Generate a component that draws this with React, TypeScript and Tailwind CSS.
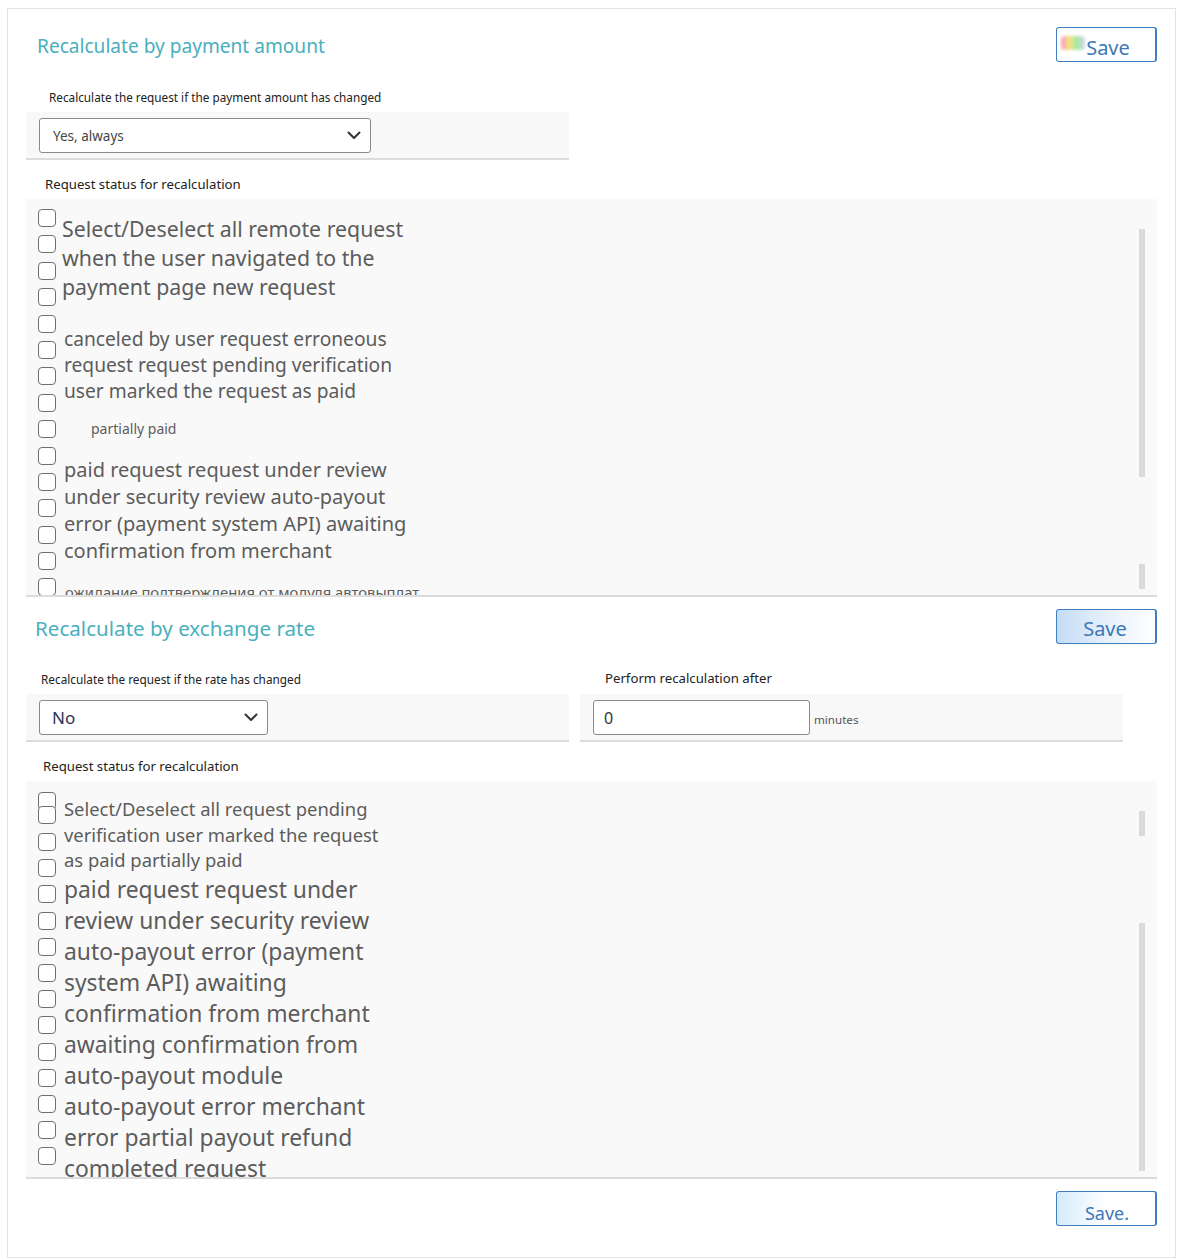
import clsx from "clsx";

const box = "block h-[18px] w-[18px] shrink-0 rounded-[4px] border border-[#6f6f6f] bg-white";

function Chevron() {
  return (
    <svg width="14" height="9" viewBox="0 0 14 9" fill="none" className="shrink-0">
      <path d="M1.5 1.5l5.5 5.5 5.5-5.5" stroke="#333" strokeWidth="2" strokeLinecap="round" strokeLinejoin="round" />
    </svg>
  );
}

function SaveButton({ variant, label }: { variant: 1 | 2 | 3; label: string }) {
  return (
    <button
      className={clsx(
        "relative flex h-[35px] w-[101px] items-center justify-center rounded-[3px] border border-[#3f7fc0] border-r-2 text-[20px] leading-none text-[#3c78b5]",
        variant === 1 && "bg-white pt-[6px]",
        variant === 2 && "bg-gradient-to-r from-[#c5dcf5] via-[#e6f0fb] to-white pt-[4px]",
        variant === 3 && "bg-gradient-to-r from-[#d3ecfb] via-white to-white pt-[8px]"
      )}
    >
      {variant === 1 && (
        <span className="absolute left-[4px] top-[8px] h-[14px] w-[24px] rounded-sm bg-[linear-gradient(90deg,#f26bb0,#f7d94a,#79e07a,#c8c3ea)] opacity-70 blur-[1.5px]" />
      )}
      <span className={clsx("relative", variant === 1 ? "ml-[4px]" : variant === 3 ? "ml-[2px] text-[18px]" : "ml-[-2px]")}>
        {label}
      </span>
    </button>
  );
}

function ScrollThumbs({ a, b }: { a: number; b: number }) {
  return (
    <div className="ml-auto mr-[12px] flex flex-col pt-[30px]">
      <span className={clsx("block w-[6px] bg-[#dadada]", a === 248 ? "h-[248px]" : "h-[25px]")} />
      <span className={clsx("mt-[87px] block w-[6px] bg-[#dadada]", b === 248 ? "h-[248px]" : "h-[25px]")} />
    </div>
  );
}

export default function App() {
  const list1 = Array.from({ length: 15 });
  const list2 = Array.from({ length: 15 });

  return (
    <div className="h-[1259px] overflow-hidden bg-white pl-[7px] pt-[8px] font-['Noto_Sans',sans-serif]">
      <div className="w-[1169px] border border-[#e3e3e3] px-[18px] pb-[31px] pt-[18px]">
        {/* payment amount */}
        <div className="flex h-[35px] items-center justify-between">
          <h2 className="pl-[11px] pt-[2px] text-[19.1px] leading-[28px] text-[#4aafbd]">Recalculate by payment amount</h2>
          <SaveButton variant={1} label="Save" />
        </div>
        <div className="mt-[27px] pl-[23px] text-[11.75px] leading-[16px] text-[#222]">
          Recalculate the request if the payment amount has changed
        </div>
        <div className="mt-[7px] h-[48px] w-[543px] border-b-2 border-[#dcdcdc] bg-[#f8f8f8] pl-[13px] pt-[6px]">
          <div className="flex h-[35px] w-[332px] items-center justify-between rounded-[3px] border border-[#8a8a8a] bg-white pl-[13px] pr-[9px]">
            <span className="pt-[2px] text-[13.5px] text-[#444]">Yes, always</span>
            <Chevron />
          </div>
        </div>
        <div className="mt-[15px] pl-[19px] text-[13.2px] leading-[18px] text-[#222]">Request status for recalculation</div>
        <div className="mt-[6px] flex h-[398px] overflow-hidden border-b-2 border-[#dcdcdc] bg-[#f9f9f9] pl-[12px]">
          <div className="flex flex-col pt-[10px]">
            {list1.map((_, i) => (
              <span key={i} className={clsx(box, i > 0 && "mt-[8.4px]")} />
            ))}
          </div>
          <div className="ml-[6px] whitespace-nowrap pt-[15px] text-[#5c5c5c]">
            <div className="text-[21.3px] leading-[29px]">
              <div>Select/Deselect all remote request</div>
              <div>when the user navigated to the</div>
              <div>payment page new request</div>
            </div>
            <div className="ml-[2px] mt-[25px] text-[19.2px] leading-[26px]">
              <div>canceled by user request erroneous</div>
              <div>request request pending verification</div>
              <div>user marked the request as paid</div>
            </div>
            <div className="ml-[29px] mt-[14.6px] text-[14px] leading-[20px]">partially paid</div>
            <div className="ml-[2px] mt-[17px] text-[20px] leading-[27px]">
              <div>paid request request under review</div>
              <div>under security review auto-payout</div>
              <div>error (payment system API) awaiting</div>
              <div>confirmation from merchant</div>
            </div>
            <div className="ml-[3px] mt-[18px] text-[14.8px] leading-[20px]">ожидание подтверждения от модуля автовыплат</div>
          </div>
          <ScrollThumbs a={248} b={25} />
        </div>

        {/* exchange rate */}
        <div className="mt-[12px] flex h-[35px] items-center justify-between">
          <h2 className="pl-[9px] pt-[2px] text-[20.6px] leading-[28px] text-[#4aafbd]">Recalculate by exchange rate</h2>
          <SaveButton variant={2} label="Save" />
        </div>
        <div className="mt-[25px] flex gap-[11px]">
          <div className="w-[543px]">
            <div className="mt-[2px] pl-[15px] text-[11.8px] leading-[16px] text-[#222]">
              Recalculate the request if the rate has changed
            </div>
            <div className="mt-[7px] h-[48px] border-b-2 border-[#dcdcdc] bg-[#f8f8f8] pl-[13px] pt-[6px]">
              <div className="flex h-[35px] w-[229px] items-center justify-between rounded-[3px] border border-[#8a8a8a] bg-white pl-[12px] pr-[9px]">
                <span className="text-[17px] text-[#2e3350]">No</span>
                <Chevron />
              </div>
            </div>
          </div>
          <div className="w-[543px]">
            <div className="pl-[25px] text-[13.2px] leading-[18px] text-[#222]">Perform recalculation after</div>
            <div className="mt-[7px] flex h-[48px] items-start border-b-2 border-[#dcdcdc] bg-[#f8f8f8] pl-[13px] pt-[6px]">
              <div className="flex h-[35px] w-[217px] items-center rounded-[3px] border border-[#8a8a8a] bg-white pl-[10px]">
                <span className="text-[16px] text-[#333]">0</span>
              </div>
              <span className="ml-[4px] mt-[12px] text-[11.6px] leading-[16px] text-[#555]">minutes</span>
            </div>
          </div>
        </div>
        <div className="mt-[15px] pl-[17px] text-[13.2px] leading-[18px] text-[#222]">Request status for recalculation</div>
        <div className="mt-[6px] flex h-[398px] overflow-hidden border-b-2 border-[#dcdcdc] bg-[#f9f9f9] pl-[12px]">
          <div className="flex flex-col pt-[11px]">
            {list2.map((_, i) => (
              <span
                key={i}
                className={clsx(box, i === 1 && "mt-[-4px]", i === 2 && "mt-[9px]", i > 2 && "mt-[8.2px]")}
              />
            ))}
          </div>
          <div className="ml-[8px] whitespace-nowrap pt-[15px] text-[#5c5c5c]">
            <div className="text-[18.4px] leading-[25.5px]">
              <div>Select/Deselect all request pending</div>
              <div>verification user marked the request</div>
              <div>as paid partially paid</div>
            </div>
            <div className="mt-[1px] text-[22.85px] leading-[31.1px]">
              <div>paid request request under</div>
              <div>review under security review</div>
              <div>auto-payout error (payment</div>
              <div>system API) awaiting</div>
              <div>confirmation from merchant</div>
              <div>awaiting confirmation from</div>
              <div>auto-payout module</div>
              <div>auto-payout error merchant</div>
              <div>error partial payout refund</div>
              <div>completed request</div>
            </div>
          </div>
          <ScrollThumbs a={25} b={248} />
        </div>
        <div className="mt-[12px] flex justify-end">
          <SaveButton variant={3} label="Save." />
        </div>
      </div>
    </div>
  );
}
